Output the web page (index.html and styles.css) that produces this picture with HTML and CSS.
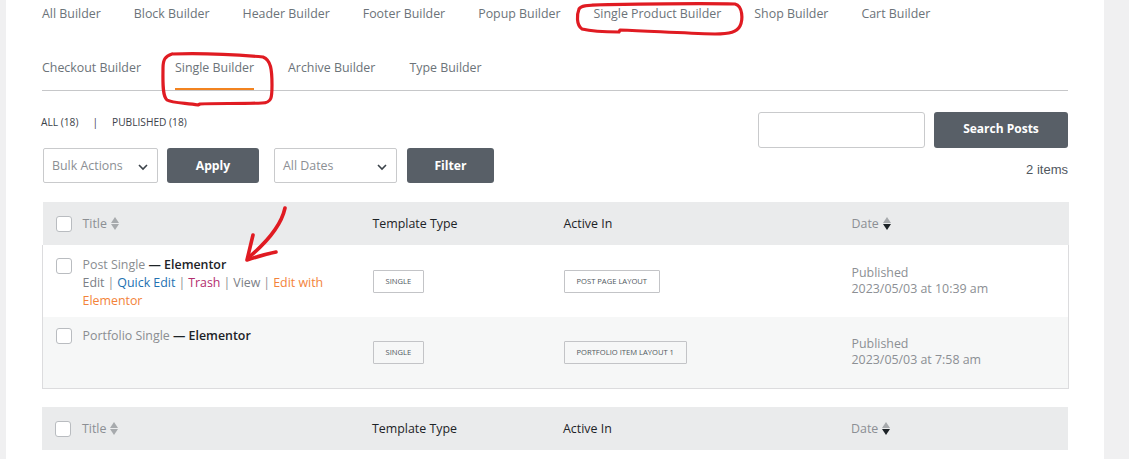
FILE: index.html
```html
<!DOCTYPE html>
<html lang="en">
<head>
<meta charset="utf-8">
<title>Single Builder</title>
<link rel="stylesheet" href="styles.css">
</head>
<body>
<div class="page">
  <div class="gutter"></div>
  <main class="panel">
    <nav class="tabs tabs-top">
      <a class="tab">All Builder</a>
      <a class="tab">Block Builder</a>
      <a class="tab">Header Builder</a>
      <a class="tab">Footer Builder</a>
      <a class="tab">Popup Builder</a>
      <a class="tab">Single Product Builder</a>
      <a class="tab">Shop Builder</a>
      <a class="tab">Cart Builder</a>
    </nav>
    <nav class="tabs tabs-second">
      <a class="tab">Checkout Builder</a>
      <a class="tab active">Single Builder</a>
      <a class="tab">Archive Builder</a>
      <a class="tab">Type Builder</a>
    </nav>

    <div class="toolbar">
      <div class="toolbar-left">
        <div class="subsub">
          <span>All (18)</span>
          <span class="sep">|</span>
          <span>Published (18)</span>
        </div>
        <div class="actions">
          <div class="select select-bulk">
            <span>Bulk Actions</span>
            <svg width="12" height="8" viewBox="0 0 12 8"><path d="M2 2l4 4 4-4" fill="none" stroke="#3c434a" stroke-width="1.6"/></svg>
          </div>
          <button class="btn btn-apply">Apply</button>
          <div class="select select-dates">
            <span>All Dates</span>
            <svg width="12" height="8" viewBox="0 0 12 8"><path d="M2 2l4 4 4-4" fill="none" stroke="#3c434a" stroke-width="1.6"/></svg>
          </div>
          <button class="btn btn-filter">Filter</button>
        </div>
      </div>
      <div class="toolbar-right">
        <div class="search">
          <input class="search-input" type="search" aria-label="Search">
          <button class="btn btn-search">Search Posts</button>
        </div>
        <div class="count">2 items</div>
      </div>
    </div>

    <table class="list">
      <colgroup>
        <col class="c-cb"><col class="c-title"><col class="c-type"><col class="c-active"><col class="c-date">
      </colgroup>
      <thead>
        <tr>
          <th class="cb"><span class="check"></span></th>
          <th class="sortable"><span class="th-label">Title</span><span class="sort"><i class="up"></i><i class="down"></i></span></th>
          <th>Template Type</th>
          <th>Active In</th>
          <th class="sortable"><span class="th-label">Date</span><span class="sort desc"><i class="up"></i><i class="down"></i></span></th>
        </tr>
      </thead>
      <tbody>
        <tr class="row row-1">
          <td class="cb top"><span class="check"></span></td>
          <td class="title top">
            <div class="post-title">Post Single <strong>— Elementor</strong></div>
            <div class="row-actions"><span class="muted">Edit</span><span class="bar">|</span><a class="blue">Quick Edit</a><span class="bar">|</span><a class="trash">Trash</a><span class="bar">|</span><span class="muted">View</span><span class="bar">|</span><a class="orange"><span>Edit with</span> <span>Elementor</span></a></div>
          </td>
          <td><span class="badge">Single</span></td>
          <td><span class="badge">Post Page Layout</span></td>
          <td class="date">Published<br>2023/05/03 at 10:39 am</td>
        </tr>
        <tr class="row row-2">
          <td class="cb top"><span class="check"></span></td>
          <td class="title top">
            <div class="post-title">Portfolio Single <strong>— Elementor</strong></div>
          </td>
          <td><span class="badge">Single</span></td>
          <td><span class="badge">Portfolio Item Layout 1</span></td>
          <td class="date">Published<br>2023/05/03 at 7:58 am</td>
        </tr>
      </tbody>
    </table>

    <table class="list list-foot">
      <colgroup>
        <col class="c-cb"><col class="c-title"><col class="c-type"><col class="c-active"><col class="c-date">
      </colgroup>
      <thead>
        <tr>
          <th class="cb"><span class="check"></span></th>
          <th class="sortable"><span class="th-label">Title</span><span class="sort"><i class="up"></i><i class="down"></i></span></th>
          <th>Template Type</th>
          <th>Active In</th>
          <th class="sortable"><span class="th-label">Date</span><span class="sort desc"><i class="up"></i><i class="down"></i></span></th>
        </tr>
      </thead>
    </table>
  </main>
  <div class="gutter-right"></div>
</div>

<svg class="marks" width="1129" height="459" viewBox="0 0 1129 459" aria-hidden="true">
  <g fill="none" stroke="#e01b22" stroke-width="3.2" stroke-linecap="round" stroke-linejoin="round">
    <path d="M592 5 C 640 4, 700 3, 735 4 C 743 6, 743 20, 740 26 C 737 32, 730 34, 715 34 C 680 33, 650 31, 620 30 L 619 32 C 600 32, 590 31, 582 29 C 576 25, 577 14, 579 9 C 581 6, 586 5, 600 5"/>
    <path d="M172 54 C 200 53, 240 55, 263 57 C 271 60, 272 70, 272 85 C 272 97, 272 103, 262 103 C 240 104, 215 103, 200 104 L 198 105 C 185 103, 172 103, 167 100 C 162 96, 163 80, 163 68 C 163 60, 165 56, 172 54"/>
    <path d="M285 208 C 282 222, 272 238, 248 258" stroke-width="3.6"/>
    <path d="M253 235 C 251 243, 249 252, 247 260 C 256 257, 266 254, 276 252" stroke-width="3.6"/>
  </g>
</svg>
</body>
</html>
```

FILE: styles.css
```css
* { box-sizing: border-box; }

html, body {
  margin: 0;
  padding: 0;
}

body {
  background: #f0f0f1;
  font-family: "Open Sans", "Liberation Sans", sans-serif;
  color: #3c434a;
  position: relative;
  width: 1129px;
  height: 459px;
  overflow: hidden;
}

.page {
  display: flex;
  height: 459px;
}

.gutter { width: 6px; flex: none; }

.panel {
  width: 1098px;
  flex: none;
  background: #fff;
  padding: 0 36px 0 36px;
}

.gutter-right { flex: 1; }

/* Tabs */
.tabs {
  display: flex;
  width: 1026px;
}

.tabs-top { gap: 33px; }
.tabs-second { gap: 34px; }

.tab {
  font-size: 12.4px;
  color: #6c7379;
  text-decoration: none;
  white-space: nowrap;
}

.tabs-top .tab {
  line-height: 28px;
}

.tabs-second {
  border-bottom: 1px solid #c6c7c9;
}

.tabs-second .tab {
  padding-top: 30px;
  line-height: 20px;
  padding-bottom: 10px;
  border-bottom: 2px solid transparent;
}

.tabs-second .tab.active {
  border-bottom-color: #f28320;
}

/* Toolbar */
.toolbar {
  display: flex;
  justify-content: space-between;
  align-items: flex-start;
  width: 1026px;
}

.toolbar-left {
  display: flex;
  flex-direction: column;
}

.subsub {
  margin-top: 23px;
  line-height: 16px;
  font-size: 10.2px;
  text-transform: uppercase;
  color: #3c434a;
  display: flex;
  margin-left: -1px;
}

.subsub .sep {
  margin: 0 14px 0 14px;
}

.actions {
  margin-top: 18px;
  display: flex;
  align-items: center;
  margin-left: 1px;
}

.select {
  height: 35px;
  border: 1px solid #c9cacc;
  border-radius: 2px;
  display: flex;
  align-items: center;
  justify-content: space-between;
  padding: 0 8px 0 8px;
  font-size: 12.4px;
  color: #8c8f94;
}

.select svg { flex: none; margin-top: 2px; }

.select-bulk { width: 115px; }
.select-dates { width: 123px; margin-left: 15px; }

.btn {
  height: 35px;
  border: 0;
  border-radius: 3px;
  background: #585f67;
  color: #fff;
  font-family: "Open Sans", "Liberation Sans", sans-serif;
  font-weight: 700;
  font-size: 12.2px;
  padding: 0;
}

.btn-apply { width: 92px; margin-left: 9px; }
.btn-filter { width: 87px; margin-left: 10px; }

.toolbar-right {
  display: flex;
  flex-direction: column;
  align-items: flex-end;
}

.search {
  margin-top: 21px;
  display: flex;
  gap: 9px;
}

.search-input {
  width: 167px;
  height: 36px;
  border: 1px solid #c9cacc;
  border-radius: 3px;
  background: #fff;
  margin: 0;
}

.btn-search {
  width: 134px;
  height: 36px;
  font-size: 12px;
  padding-bottom: 3px;
}

.count {
  margin-top: 13px;
  line-height: 18px;
  font-family: "Liberation Sans", Arial, sans-serif;
  font-size: 13px;
  color: #50575e;
}

/* Tables */
.list {
  width: 1026px;
  border-collapse: collapse;
  table-layout: fixed;
  margin-top: 19px;
}

.list-foot { margin-top: 18px; }

.c-cb { width: 40px; }
.c-title { width: 290px; }
.c-type { width: 191px; }
.c-active { width: 288px; }
.c-date { width: 217px; }

.list thead tr {
  background: #eaebec;
  height: 43px;
}

.list th {
  text-align: left;
  font-weight: 400;
  font-size: 12.4px;
  color: #1d2327;
  padding: 0;
  vertical-align: middle;
}

.list th.sortable { color: #8c8f94; }

.th-label { vertical-align: middle; }

.list th.cb, .list td.cb {
  padding-left: 13px;
}

.check {
  display: block;
  width: 16px;
  height: 16px;
  border: 1px solid #b9bcc0;
  border-radius: 3px;
  background: #fff;
}

th .check { margin-top: 1px; }

.sort {
  display: inline-flex;
  flex-direction: column;
  gap: 1px;
  vertical-align: middle;
  margin-left: 4px;
  margin-top: -1px;
}

.sort i {
  display: block;
  width: 0;
  height: 0;
  border-left: 4px solid transparent;
  border-right: 4px solid transparent;
}

.sort .up { border-bottom: 6px solid #a7aaad; }
.sort .down { border-top: 6px solid #a7aaad; }
.sort.desc .down { border-top-color: #1d2327; }

.list tbody td {
  padding: 0;
  vertical-align: middle;
  font-size: 12.4px;
}

.list tbody tr.row {
  border-left: 1px solid #dcdcde;
  border-right: 1px solid #dcdcde;
}

.list tbody tr.row-1 { height: 72px; background: #fff; }
.list tbody tr.row-2 {
  height: 71px;
  background: #f6f7f7;
  border-bottom: 1px solid #dcdcde;
}

.list td.top { vertical-align: top; }
.row-1 td.cb { padding-top: 13px; }
.row-2 td.cb { padding-top: 11px; }
.row-1 td.title { padding-top: 11px; }
.row-2 td.title { padding-top: 10px; }

.post-title {
  line-height: 18px;
  color: #8a8d91;
}

.post-title strong {
  color: #1d2327;
  font-weight: 600;
}

.row-actions {
  line-height: 18px;
  color: #8c8f94;
  width: 262px;
}

.row-actions .bar {
  margin: 0 3px;
}

.row-actions .muted { color: #7c8086; }
.row-actions .blue { color: #2271b1; }
.row-actions .trash { color: #b32d6e; }
.row-actions .orange { color: #f3833a; }

.badge {
  display: inline-block;
  height: 23px;
  line-height: 21px;
  padding: 0 12px;
  border: 1px solid #c3c4c7;
  border-radius: 1px;
  font-size: 7.6px;
  text-transform: uppercase;
  color: #50575e;
  background: #fff;
  white-space: nowrap;
}

.row-2 .badge { background: transparent; }

.date {
  line-height: 16px;
  color: #8c8f94;
  font-size: 12px;
}

.marks {
  position: absolute;
  left: 0;
  top: 0;
  pointer-events: none;
}
```
